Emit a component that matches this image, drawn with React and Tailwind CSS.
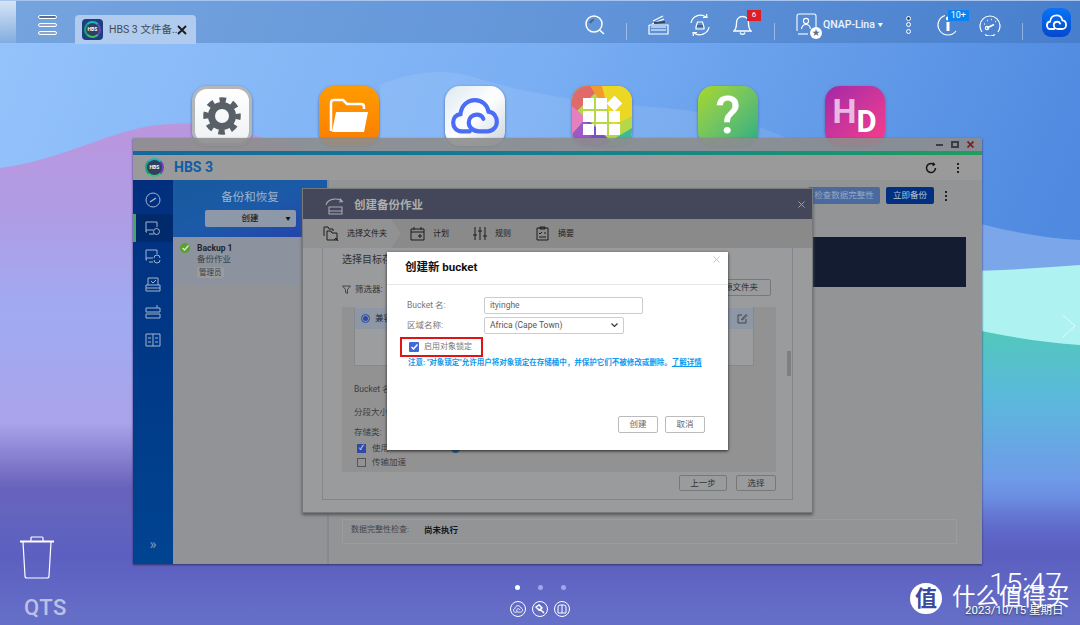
import React from "react";

const Wallpaper = () => (
  <svg className="absolute inset-0 h-full w-full" viewBox="0 0 1080 625" preserveAspectRatio="none">
    <defs>
      <linearGradient id="sky" x1="0" y1="0" x2="1" y2="0.25">
        <stop offset="0" stopColor="#95c3fb" />
        <stop offset="0.5" stopColor="#79aef3" />
        <stop offset="1" stopColor="#4f8ae0" />
      </linearGradient>
      <linearGradient id="lilac" x1="0" y1="120" x2="0" y2="625" gradientUnits="userSpaceOnUse">
        <stop offset="0" stopColor="#bb96dd" />
        <stop offset="0.2" stopColor="#ae9de6" />
        <stop offset="0.38" stopColor="#a0abf2" />
        <stop offset="0.6" stopColor="#a9a3ea" />
        <stop offset="0.68" stopColor="#8279cb" />
        <stop offset="0.73" stopColor="#6662bb" />
        <stop offset="1" stopColor="#6870c8" />
      </linearGradient>
      <linearGradient id="teal" x1="0" y1="330" x2="0" y2="560" gradientUnits="userSpaceOnUse">
        <stop offset="0" stopColor="#52c8bb" />
        <stop offset="0.3" stopColor="#5bb9dd" />
        <stop offset="0.65" stopColor="#6f9ae8" />
        <stop offset="1" stopColor="#5c60c8" />
      </linearGradient>
      <linearGradient id="bottom" x1="0" y1="500" x2="0" y2="625" gradientUnits="userSpaceOnUse">
        <stop offset="0" stopColor="#5c5fc0" stopOpacity="0" />
        <stop offset="0.45" stopColor="#5c5fc0" />
        <stop offset="1" stopColor="#6670c8" />
      </linearGradient>
    </defs>
    <rect width="1080" height="625" fill="url(#sky)" />
    <path d="M380 85C410 72 440 68 470 76C520 92 570 100 640 106C700 110 750 118 800 145L800 300L380 300Z" fill="#ffffff" fillOpacity="0.09" />
    <path d="M0 168C60 160 100 135 150 126C190 120 230 124 300 150L620 625L0 625Z" fill="url(#lilac)" />
    <path d="M960 218C1000 230 1040 238 1080 240L1080 300L960 300Z" fill="#7ca6ea" />
    <path d="M960 271C1000 271 1040 268 1080 265L1080 350L960 350Z" fill="#aef3f2" />
    <path d="M960 326C1000 336 1040 342 1080 345L1080 625L960 625Z" fill="url(#teal)" />
    <rect y="500" width="1080" height="125" fill="url(#bottom)" />
  </svg>
);

const TopBar = () => (
  <div className="absolute left-0 right-0 top-0 flex h-[43px] items-stretch border-t border-[#a6c4ee] bg-[#2f5c9c]/30">
    <div className="w-[16px] bg-linear-to-b from-white/70 to-white/10" />
    <div className="ml-[22px] mt-[14px] flex h-[20px] w-[19px] flex-col justify-between">
      <div className="h-[4px] rounded-full border border-white bg-[#5a6f92]" />
      <div className="h-[4px] rounded-full border border-white bg-[#8aa6cc]" />
      <div className="h-[4px] rounded-full border border-white bg-[#8aa6cc]" />
    </div>
    <div className="ml-[18px] mt-[14px] flex h-[29px] w-[121px] items-center rounded-t bg-[#b0cbee] pl-[7px]">
      <HbsLogo size={21} square />
      <span className="ml-[6px] w-[62px] whitespace-nowrap text-[10.500px] text-[#444b55]">HBS 3 文件备...</span>
      <svg className="ml-[6px]" width="10" height="10" viewBox="0 0 10 10">
        <path d="M1 1L9 9M9 1L1 9" stroke="#1b1b1b" strokeWidth="1.8" />
      </svg>
    </div>
    <div className="ml-[389px] flex items-center pt-[5px] text-white">
      <svg width="20" height="20" viewBox="0 0 20 20" fill="none" stroke="white" strokeWidth="1.5">
        <circle cx="9" cy="9" r="8" />
        <path d="M14.5 15L19 19" />
        <path d="M5 8C6 6 7 5 9 5" strokeWidth="2" stroke="#50627f" />
      </svg>
      <div className="ml-[21px] mt-[14px] h-[17px] w-px bg-white/40" />
      <svg className="ml-[21px]" width="21" height="21" viewBox="0 0 21 21" fill="none" stroke="white" strokeWidth="1.2">
        <path d="M1 11V20H20V11H1" />
        <path d="M4 10L16 5M5 7L15 2" />
        <path d="M3 13H18M3 16H18" />
        <path d="M6 9L17 8" stroke="#33475f" strokeWidth="2" />
      </svg>
      <svg className="ml-[20px]" width="22" height="22" viewBox="0 0 22 22" fill="none" stroke="white" strokeWidth="1.2">
        <path d="M2 9A9.5 9.5 0 0 1 17 3M20 13A9.5 9.5 0 0 1 5 19" />
        <path d="M14 3.5L18 3.5L17.5 0M8 18.5L4 18.5L4.5 22" />
        <path d="M7 13L8.5 8H13.5L15 13V15H7Z" />
        <path d="M8 12H14" stroke="#33475f" />
      </svg>
      <div className="relative ml-[22px] h-[22px] w-[19px]">
        <svg width="19" height="22" viewBox="0 0 19 22" fill="none" stroke="white" strokeWidth="1.3">
          <path d="M1 17C3 15 3.5 13 3.5 9C3.5 5 6 2.5 9.5 2.5C13 2.5 15.5 5 15.5 9C15.5 13 16 15 18 17Z" />
          <path d="M7 18.5A2.6 2.6 0 0 0 12 18.5" />
        </svg>
        <div className="absolute left-[14px] top-[-4px] flex h-[11px] w-[14px] items-center justify-center bg-[#dc1f26] text-[8px] leading-none text-white">6</div>
      </div>
      <div className="ml-[22px] mt-[14px] h-[17px] w-px bg-white/40" />
      <div className="relative ml-[21px] h-[24px] w-[21px]">
        <svg width="21" height="24" viewBox="0 0 21 24" fill="none" stroke="white" strokeWidth="1.1">
          <path d="M1 18V3Q1 1 3 1H18Q20 1 20 3V15" />
          <circle cx="10" cy="8" r="2.6" />
          <path d="M5.5 16C6 12.5 8 11.5 10 11.5C12 11.5 14 12.5 14.5 16" />
          <path d="M2 21H12" />
        </svg>
        <div className="absolute left-[14px] top-[14px] flex h-[12px] w-[12px] items-center justify-center rounded-full bg-white text-[8px] leading-none text-[#5a6f92]">★</div>
      </div>
      <span className="ml-[6px] text-[10.500px] font-medium text-white/90">QNAP-Lina</span>
      <span className="ml-[3px] text-[5px] text-white">▼</span>
      <div className="ml-[23px] flex h-[18px] w-[6px] flex-col justify-between">
        <div className="h-[5px] w-[5px] rounded-full border border-white bg-[#33475f]" />
        <div className="h-[5px] w-[5px] rounded-full border border-white" />
        <div className="h-[5px] w-[5px] rounded-full border border-white" />
      </div>
      <div className="relative ml-[25px] h-[22px] w-[22px]">
        <svg width="22" height="22" viewBox="0 0 22 22" fill="none" stroke="white" strokeWidth="1.2">
          <path d="M3 17A10 10 0 0 1 8 1.5M19 17A10 10 0 0 1 3 17" />
          <path d="M11 8V17" strokeWidth="3" />
          <circle cx="11" cy="4.5" r="1.5" fill="white" />
        </svg>
        <div className="absolute left-[11px] top-[-4px] flex h-[11px] w-[21px] items-center justify-center bg-[#0a83f0] text-[9px] leading-none text-white">10+</div>
      </div>
      <svg className="ml-[20px]" width="22" height="22" viewBox="0 0 22 22" fill="none" stroke="white" strokeWidth="1.2">
        <path d="M3 18A10 10 0 1 1 19 18M6 20.5A9 9 0 0 0 16 20.5" />
        <path d="M8 14L15 10.5" strokeWidth="1.8" />
        <circle cx="8" cy="14" r="1.6" />
        <path d="M5 10H5.8M8 6.5H8.8M12 5.5H12.8M16 7.5H16.8" strokeWidth="1.5" />
      </svg>
      <div className="ml-[21px] mt-[14px] h-[17px] w-px bg-white/40" />
      <div className="mb-[5px] ml-[19px] flex h-[29px] w-[29px] items-center justify-center rounded-[9px] bg-linear-to-b from-[#0a74f5] to-[#0647d0]">
        <CloudMark size={21} stroke="white" />
      </div>
    </div>
  </div>
);

const CloudMark = ({ size, stroke }) => (
  <svg width={size} height={size * 0.78} viewBox="0 0 46 36" fill="none" stroke={stroke} strokeWidth="4" strokeLinecap="round">
    <path d="M18 33H10C5 33 2 29 2 24.500C2 20 5 17 9 16.500C10 8 16 3 23 3C30 3 35 8 36 14C41 14.500 44 19 44 24C44 29 40 33 35 33H27C21 33 17 29 17 24.500C17 20 20.500 17 24.500 17C27.500 17 30 18.500 31 21" />
  </svg>
);

const HbsLogo = ({ size, square }) => (
  <div
    className={
      square
        ? "flex h-[21px] w-[21px] items-center justify-center rounded-[4px] bg-[#1d3f80]"
        : "flex h-[19px] w-[19px] items-center justify-center"
    }
  >
    <div
      className="flex shrink-0 items-center justify-center rounded-full border-2 border-t-[#19b6c2] border-r-[#6a42c2] border-b-[#3cc26c] border-l-[#1aa27a] bg-[#31405f] text-[5px] font-bold leading-none text-white"
      style={{ width: size - 4, height: size - 4 }}
    >
      HBS
    </div>
  </div>
);

// 바탕화면 아이콘
const DesktopIcons = () => (
  <div className="absolute left-[192px] top-[86px] flex gap-[66.500px]">
    <div className="flex h-[60px] w-[60px] items-center justify-center rounded-[15px] border-[3px] border-[#b4b6ba] bg-linear-to-b from-white to-[#eef1f4] shadow-[0_1px_3px_#4a6aa0]">
      <svg width="38" height="38" viewBox="0 0 38 38" fill="none" stroke="#5a6068">
        <circle cx="19" cy="19" r="10.500" strokeWidth="7" />
        <circle cx="19" cy="19" r="16" strokeWidth="5.500" strokeDasharray="6.500 6.070" strokeDashoffset="3" />
      </svg>
    </div>
    <div className="flex h-[60px] w-[60px] items-center justify-center rounded-[15px] bg-linear-to-b from-[#ff9b00] to-[#fa7d00] shadow-[0_1px_3px_#4a6aa0]">
      <svg width="42" height="36" viewBox="0 0 42 36" fill="none">
        <path d="M3 33V5Q3 2 6 2H15L19 6H33Q36 6 36 9V11" stroke="white" strokeWidth="2.500" />
        <path d="M8 14H40L36 34H4Z" fill="white" />
      </svg>
    </div>
    <div className="flex h-[60px] w-[60px] items-center justify-center rounded-[15px] bg-linear-to-br from-[#dde9f0] via-white to-[#c9d5dd] shadow-[0_1px_3px_#4a6aa0]">
      <CloudMark size={48} stroke="#4a6cf7" />
    </div>
    <div className="relative flex h-[60px] w-[60px] items-center justify-center overflow-hidden rounded-[15px] bg-[#e8b83c] shadow-[0_1px_3px_#4a6aa0]">
      <svg className="absolute inset-0" width="60" height="60" viewBox="0 0 60 60">
        <rect width="60" height="60" fill="#b4d84a" />
        <path d="M0 0H30L0 30Z" fill="#e06a6a" />
        <path d="M18 0H44L30 18Z" fill="#f09a30" />
        <path d="M30 0H60V30L40 40Z" fill="#ecd824" />
        <path d="M0 20L14 32L0 48Z" fill="#e57fc0" />
        <path d="M0 48L14 32L34 60H0Z" fill="#9a58c8" />
        <path d="M14 32L44 60H22Z" fill="#7a50c8" />
        <path d="M60 42V60H30Z" fill="#3dbb98" />
      </svg>
      <div className="relative grid w-[38px] grid-cols-3 gap-[2px]">
        {["a", "b", "d", "e", "f", "g", "h", "i", "j"].map((k) => (
          <div key={k} className={k === "d" ? "h-[11px] w-[11px] rotate-45 bg-white" : "h-[11px] w-[11px] bg-white"} />
        ))}
      </div>
    </div>
    <div className="flex h-[60px] w-[60px] items-center justify-center rounded-[15px] bg-linear-to-br from-[#a6d81a] to-[#20ad82] text-[52px] font-medium leading-[60px] text-white shadow-[0_1px_3px_#4a6aa0]">
      ?
    </div>
    <div className="flex h-[60px] w-[60px] items-end justify-center rounded-[15px] bg-linear-to-br from-[#a426a6] to-[#fa3c8a] pb-[9px] font-bold leading-none shadow-[0_1px_3px_#4a6aa0]">
      <span className="mb-[9px] text-[34px] text-[#eab9e2]">H</span>
      <span className="text-[31px] text-white">D</span>
    </div>
  </div>
);

const SideIcon = ({ children, active }) => (
  <div
    className={
      active
        ? "flex h-[28px] items-center justify-center border-l-[3px] border-[#4aa46e] bg-[#012a6c] pr-[3px]"
        : "flex h-[28px] items-center justify-center"
    }
  >
    <svg width="16" height="16" viewBox="0 0 16 16" fill="none" stroke="#a4b4cc" strokeWidth="1">
      {children}
    </svg>
  </div>
);

const HbsWindow = () => (
  <div className="absolute left-[133px] top-[138px] flex h-[426px] w-[849px] flex-col shadow-[0_1px_2px_#33336a]">
    <div className="flex h-[13px] items-center justify-end gap-[8px] bg-[#8d8d8d]/90 pr-[8px]">
      <div className="h-[2px] w-[7px] bg-[#3d3d3d]" />
      <div className="h-[7px] w-[8px] border-2 border-[#3d3d3d]" />
      <svg width="7" height="7" viewBox="0 0 7 7">
        <path d="M0.500 0.500L6.500 6.500M6.500 0.500L0.500 6.500" stroke="#8b1a1a" strokeWidth="1.800" />
      </svg>
    </div>
    <div className="h-[4px] bg-linear-to-r from-[#14689c] via-[#147f8e] to-[#1f9e5c]" />
    <div className="flex h-[25px] items-center bg-[#9a9a9a] pl-[12px] pr-[23px]">
      <HbsLogo size={23} />
      <span className="ml-[10px] text-[14px] font-bold text-[#0f5ca8]">HBS 3</span>
      <svg className="ml-auto" width="12" height="12" viewBox="0 0 12 12" fill="none" stroke="#151515" strokeWidth="1.500">
        <path d="M10.500 6A4.500 4.500 0 1 1 8.500 2.300" />
        <path d="M8 0L10.500 2.500L7.500 4.500" fill="#151515" stroke="none" />
      </svg>
      <div className="ml-[20px] flex h-[10px] flex-col justify-between">
        <div className="h-[2px] w-[2px] bg-[#222]" />
        <div className="h-[2px] w-[2px] bg-[#222]" />
        <div className="h-[2px] w-[2px] bg-[#222]" />
      </div>
    </div>
    <div className="flex min-h-0 flex-1">
      <div className="flex w-[40px] flex-col bg-linear-to-b from-[#012f7e] to-[#004491] pt-[6px]">
        <SideIcon>
          <circle cx="8" cy="8" r="7" />
          <path d="M5 10L11 6" strokeWidth="1.500" />
        </SideIcon>
        <SideIcon active>
          <path d="M2 12H1V2H12V7M4 14H9M1 10H8" />
          <circle cx="11.500" cy="11.500" r="3" />
        </SideIcon>
        <SideIcon>
          <path d="M2 12H1V2H12V6M4 14H8M1 10H8" />
          <path d="M9 10A3 3 0 0 1 15 10M15 12A3 3 0 0 1 9 12" />
        </SideIcon>
        <SideIcon>
          <path d="M1 9H15V15H1ZM3 9V2H13V9M6 5L8 7L11 4M1 12H15" />
        </SideIcon>
        <SideIcon>
          <path d="M1 4H15V8H1ZM1 10H15V14H1ZM12 4V1" />
        </SideIcon>
        <SideIcon>
          <path d="M1 2H15V14H1ZM8 2V14M3 6H6M10 6H13M3 10H6M10 10H13" />
        </SideIcon>
        <div className="mt-auto pb-[12px] text-center text-[15px] leading-none text-[#7f95ba]">»</div>
      </div>
      <div className="flex w-[154px] flex-col bg-[#929396]">
        <div className="flex h-[57px] flex-col items-center bg-linear-to-br from-[#175a9c] via-[#1b5aa8] to-[#2440ad] pt-[9px]">
          <span className="text-[11.500px] leading-[16px] text-[#9db4cc]">备份和恢复</span>
          <div className="relative mt-[5px] flex h-[17px] w-[91px] items-center justify-center rounded-[2px] bg-[#8d98a8] text-[8.500px] font-medium text-[#1b1f26]">
            创建
            <span className="absolute right-[5px] text-[5px] text-[#111]">▼</span>
          </div>
        </div>
        <div className="flex h-[49px] items-start bg-[#8d939e] pl-[7px] pt-[6px]">
          <div className="flex h-[10px] w-[10px] items-center justify-center rounded-full bg-[#5aa02c]">
            <svg width="7" height="6" viewBox="0 0 7 6" fill="none" stroke="#dfe8d8" strokeWidth="1.300">
              <path d="M0.500 3L2.500 5L6.500 0.500" />
            </svg>
          </div>
          <div className="ml-[7px] flex flex-col items-start">
            <span className="text-[8.500px] font-bold leading-[11px] text-[#20252c]">Backup 1</span>
            <span className="text-[8.500px] leading-[11px] text-[#3d4148]">备份作业</span>
            <span className="mt-[2px] rounded-[2px] bg-[#9a9b9d] px-[2px] text-[7.500px] leading-[11px] text-[#3a3d42]">管理员</span>
          </div>
        </div>
      </div>
      <div className="flex flex-1 flex-col border-l-2 border-[#88898c] bg-[#939496] pl-[13px] pr-[16px]">
        <div className="flex items-center justify-end pt-[7px]">
          <div className="flex h-[17px] w-[72px] items-center justify-center rounded-[2px] bg-[#4a6a9d] text-[8.500px] text-[#93a8c6]">检查数据完整性</div>
          <div className="ml-[6px] flex h-[17px] w-[48px] items-center justify-center rounded-[2px] bg-[#00307f] text-[8.500px] text-[#b9c6da]">立即备份</div>
          <div className="ml-[11px] mr-[19px] flex h-[10px] flex-col justify-between">
            <div className="h-[2px] w-[2px] bg-[#222]" />
            <div className="h-[2px] w-[2px] bg-[#222]" />
            <div className="h-[2px] w-[2px] bg-[#222]" />
          </div>
        </div>
        <div className="mt-[33px] h-[50px] bg-[#141c31]" />
        <div className="mb-[20px] mr-[9px] mt-auto flex h-[25px] items-center border border-[#9b9c9e] pb-[3px] pl-[8px]">
          <span className="w-[73px] text-[8px] text-[#44474c]">数据完整性检查:</span>
          <span className="text-[8.500px] font-bold text-[#12161f]">尚未执行</span>
        </div>
      </div>
    </div>
  </div>
);

const WizardTab = ({ label, children, width }) => (
  <div className="flex items-center" style={{ width }}>
    <svg width="15" height="15" viewBox="0 0 15 15" fill="none" stroke="#1c1c1c" strokeWidth="1">
      {children}
    </svg>
    <span className="ml-[8px] text-[8px] text-[#1d1d1d]">{label}</span>
  </div>
);

const BackupDialog = () => (
  <div className="absolute left-[302px] top-[188px] flex h-[325px] w-[511px] flex-col border border-[#77787a] bg-[#9a9b9d] shadow-[0_2px_3px_#55565a]">
    <div className="flex h-[30px] items-center bg-[#44475a] pl-[22px] pr-[7px] pt-[4px]">
      <svg width="21" height="17" viewBox="0 0 21 17" fill="none" stroke="#a8a9ad" strokeWidth="1.100">
        <path d="M1 7A9.500 7 0 0 1 17 3M15 0.500L17.500 3.500L14 4" />
        <path d="M4 9H17V13H4ZM4 13L4 16H17V13" />
      </svg>
      <span className="ml-[8px] text-[11.500px] font-bold text-[#aeaeae]">创建备份作业</span>
      <svg className="mb-[4px] ml-auto" width="7" height="7" viewBox="0 0 7 7">
        <path d="M0.500 0.500L6.500 6.500M6.500 0.500L0.500 6.500" stroke="#a0a0a4" />
      </svg>
    </div>
    <div className="flex h-[29px] items-center bg-[#8a8a8a]">
      <div className="flex h-full w-[98px] items-center bg-[#929292] pl-[20px] [clip-path:polygon(0_0,90%_0,100%_50%,90%_100%,0_100%)]">
        <svg width="18" height="16" viewBox="0 0 18 16" fill="none" stroke="#1c1c1c" strokeWidth="1">
          <path d="M1 10V1H5L6 3H10V5M4 14V5H8L9 7H14V14ZM11 14L13 12L15 15" />
        </svg>
        <span className="ml-[6px] text-[8px] text-[#1d1d1d]">选择文件夹</span>
      </div>
      <div className="ml-[9px] flex">
        <WizardTab label="计划" width={62}>
          <path d="M1 3H14V14H1ZM1 6H14M4 1V4M11 1V4M9 9H11V11H9Z" />
        </WizardTab>
        <WizardTab label="规则" width={63}>
          <path d="M3 1V14M8 1V14M13 1V14M1 9H5M6 5H10M11 10H15" />
        </WizardTab>
        <WizardTab label="摘要" width={60}>
          <path d="M2 2H13V14H2ZM5 1H10V3H5ZM4 7L5 8L7 6M9 7H11M4 11H11" />
        </WizardTab>
      </div>
    </div>
    <div className="flex min-h-0 flex-1 px-[19px] pb-[12px]">
      <div className="relative flex flex-1 flex-col border-x border-b border-[#84858a] pl-[19px] pr-[16px]">
        <span className="mt-[5px] text-[10px] leading-[14px] text-[#2f3135]">选择目标存储空间</span>
        <div className="mt-[12px] flex h-[17px] items-start justify-between">
          <span className="flex items-center pt-[4px] text-[8.500px] text-[#303236]">
            <svg className="mr-[4px]" width="9" height="9" viewBox="0 0 9 9" fill="none" stroke="#303236" strokeWidth="0.800">
              <path d="M0.500 1H8.500L5.500 4.500V8.500L3.500 7.500V4.500Z" />
            </svg>
            筛选器:
          </span>
          <div className="mr-[5px] flex h-[17px] w-[60px] items-center justify-center rounded-[2px] border border-[#77787a] text-[8.500px] text-[#303236]">源文件夹</div>
        </div>
        <div className="mt-[11px] flex h-[165px] flex-col bg-[#929292] pl-[12px] pr-[22px]">
          <div className="h-[59px] border-x border-b border-[#86888c] bg-[#9c9d9f] pt-px">
            <div className="flex h-[21px] items-center justify-between bg-[#8e97a6] pl-[6px] pr-[5px]">
              <span className="flex items-center text-[8.500px] text-[#2b2d31]">
                <span className="mr-[5px] flex h-[9px] w-[9px] items-center justify-center rounded-full border border-[#2f49a8]">
                  <span className="h-[5px] w-[5px] rounded-full bg-[#2f49a8]" />
                </span>
                兼容
              </span>
              <svg width="11" height="11" viewBox="0 0 11 11" fill="none" stroke="#3a3c40" strokeWidth="0.900">
                <path d="M9 6V10H1V2H5M4.500 6.500L9 1.500L10 2.500L5.500 7Z" />
              </svg>
            </div>
          </div>
          <div className="mt-[17px] flex flex-col text-[8.500px] leading-[13px] text-[#3c3e42]">
            <span>Bucket 名</span>
            <span className="mt-[10px]">分段大小</span>
            <span className="mt-[7px]">存储类:</span>
          </div>
          <div className="ml-[3px] mt-[5px] flex flex-col gap-[5px] text-[8.500px] leading-[9px] text-[#3c3e42]">
            <span className="flex items-center">
              <span className="mr-[6px] flex h-[9px] w-[9px] items-center justify-center bg-[#2f49a8] text-[7px] leading-none text-white">✓</span>
              使用
              <span className="ml-[62px] h-[9px] w-[9px] rounded-full bg-[#1b5a9c]" />
            </span>
            <span className="flex items-center">
              <span className="mr-[6px] h-[9px] w-[9px] border border-[#55575c]" />
              传输加速
            </span>
          </div>
        </div>
        <div className="mt-[3px] flex justify-end gap-[9px]">
          <div className="flex h-[16px] w-[48px] items-center justify-center rounded-[2px] border border-[#77787a] text-[8.500px] text-[#2f3135]">上一步</div>
          <div className="flex h-[16px] w-[40px] items-center justify-center rounded-[2px] border border-[#77787a] text-[8.500px] text-[#2f3135]">选择</div>
        </div>
        <div className="absolute right-[1px] top-[103px] h-[25px] w-[4px] bg-[#7e7f81]" />
      </div>
    </div>
  </div>
);

const BucketDialog = () => (
  <div className="absolute left-[387px] top-[252px] flex h-[198px] w-[341px] flex-col bg-white shadow-[0_1px_3px_#222]">
    <div className="flex h-[33px] items-center justify-between border-b border-[#e8e8e8] pl-[18px] pr-[8px]">
      <span className="text-[11.500px] font-bold text-[#111]">创建新 bucket</span>
      <svg className="mb-[17px]" width="7" height="7" viewBox="0 0 7 7">
        <path d="M0.500 0.500L6.500 6.500M6.500 0.500L0.500 6.500" stroke="#c4c4c4" />
      </svg>
    </div>
    <div className="flex flex-1 flex-col pl-[13px] pr-[23px] pt-[12px]">
      <div className="flex h-[17px] items-center">
        <span className="ml-[7px] w-[77px] text-[8.500px] text-[#777]">Bucket 名:</span>
        <div className="flex h-[17px] w-[159px] items-center rounded-[2px] border border-[#ccc] pl-[5px] text-[8.500px] text-[#666]">ityinghe</div>
      </div>
      <div className="mt-[3px] flex h-[17px] items-center">
        <span className="ml-[7px] w-[77px] text-[8.500px] text-[#777]">区域名称:</span>
        <div className="flex h-[17px] w-[140px] items-center justify-between rounded-[2px] border border-[#ccc] pl-[5px] pr-[5px] text-[8.500px] text-[#555]">
          Africa (Cape Town)
          <svg width="7" height="5" viewBox="0 0 7 5" fill="none" stroke="#333" strokeWidth="1.200">
            <path d="M0.500 0.500L3.500 3.500L6.500 0.500" />
          </svg>
        </div>
      </div>
      <div className="mt-[3px] flex h-[20px] w-[83px] items-center border-2 border-[#e01414] pl-[7px]">
        <span className="flex h-[10px] w-[10px] items-center justify-center rounded-[1px] bg-[#4169d8]">
          <svg width="7" height="6" viewBox="0 0 7 6" fill="none" stroke="white" strokeWidth="1.500">
            <path d="M0.500 3L2.500 5L6.500 0.500" />
          </svg>
        </span>
        <span className="ml-[5px] whitespace-nowrap text-[8px] text-[#777]">启用对象锁定</span>
      </div>
      <p className="ml-[8px] whitespace-nowrap text-[7.500px] font-bold leading-[12px] text-[#0a9bf0]">
        注意: "对象锁定"允许用户将对象锁定在存储桶中，并保护它们不被修改或删除。<span className="underline">了解详情</span>
      </p>
      <div className="mt-[47px] flex justify-end gap-[7px]">
        <div className="flex h-[17px] w-[40px] items-center justify-center rounded-[2px] border border-[#bbb] text-[8.500px] text-[#666]">创建</div>
        <div className="flex h-[17px] w-[40px] items-center justify-center rounded-[2px] border border-[#bbb] text-[8.500px] text-[#666]">取消</div>
      </div>
    </div>
  </div>
);

const BottomDock = () => (
  <div className="absolute left-[505px] top-[585px] flex w-[70px] flex-col items-center">
    <div className="flex items-center gap-[18px]">
      <div className="h-[5px] w-[5px] rounded-full bg-white" />
      <div className="h-[5px] w-[5px] rounded-full bg-[#a3a6e4]" />
      <div className="h-[5px] w-[5px] rounded-full bg-[#a3a6e4]" />
    </div>
    <div className="mt-[11px] flex gap-[6px]">
      <div className="flex h-[16px] w-[16px] items-center justify-center rounded-full border border-white">
        <CloudMark size={10} stroke="white" />
      </div>
      <div className="flex h-[16px] w-[16px] items-center justify-center rounded-full border border-white">
        <svg width="10" height="10" viewBox="0 0 10 10" fill="none" stroke="white" strokeWidth="1.500">
          <path d="M1 3L4 1L7 4L4 6ZM5 5L9 9" />
        </svg>
      </div>
      <div className="flex h-[16px] w-[16px] items-center justify-center rounded-full border border-white">
        <svg width="10" height="10" viewBox="0 0 10 10" fill="none" stroke="white" strokeWidth="1">
          <path d="M1 9V3Q1 1 3 1H7Q9 1 9 3V9ZM5 1V9" />
        </svg>
      </div>
    </div>
  </div>
);

const App = () => (
  <div className="relative h-[625px] w-[1080px] overflow-hidden font-['Roboto','Noto_Sans_CJK_SC',sans-serif]">
    <Wallpaper />
    <TopBar />
    <DesktopIcons />
    <HbsWindow />
    <BackupDialog />
    <BucketDialog />

    {/* 휴지통 / QTS */}
    <svg className="absolute left-[20px] top-[536px]" width="34" height="43" viewBox="0 0 34 43" fill="none" stroke="white" strokeWidth="1.200">
      <path d="M0 5.500H34" strokeWidth="1.800" />
      <path d="M11 5V2Q11 1 12 1H22Q23 1 23 2V5" />
      <path d="M3 6L5 40Q5 42 7 42H27Q29 42 29 40L31 6" />
    </svg>
    <span className="absolute left-[24px] top-[596px] text-[22px] font-medium leading-[24px] tracking-[0.500px] text-[#bcc0e6]">QTS</span>

    <svg className="absolute left-[1062px] top-[314px]" width="14" height="24" viewBox="0 0 14 24" fill="none" stroke="white" strokeOpacity="0.600">
      <path d="M1 1L13 12L1 23" />
    </svg>

    <BottomDock />

    {/* 시계 + 워터마크 */}
    <span className="absolute left-[989px] top-[567px] text-[30px] font-light leading-[34px] text-white">15:47</span>
    <span className="absolute left-[965px] top-[602px] whitespace-nowrap text-[11.500px] leading-[16px] text-white [text-shadow:0_1px_2px_#333]">2023/10/15 星期日</span>
    <div className="absolute left-[910px] top-[583px] flex h-[31px] w-[32px] items-center justify-center rounded-full bg-white text-[22px] font-bold leading-none text-[#3a4a9c]">值</div>
    <span className="absolute left-[952px] top-[582px] whitespace-nowrap text-[23.500px] leading-[30px] text-white">什么值得买</span>
  </div>
);

export default App;
